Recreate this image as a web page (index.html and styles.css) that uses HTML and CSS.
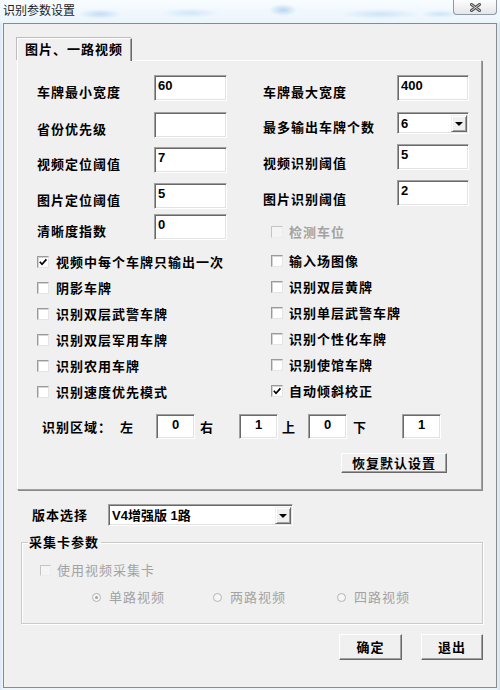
FILE: index.html
```html
<!DOCTYPE html>
<html lang="zh-CN">
<head>
<meta charset="utf-8">
<title>识别参数设置</title>
<link rel="stylesheet" href="styles.css">
</head>
<body>
<div class="window">
  <div class="titlebar">
    <span class="title">识别参数设置</span>
    <div class="close">
      <svg width="13" height="9" viewBox="0 0 13 9"><path d="M2.5 1.5L10.5 7.5M10.5 1.5L2.5 7.5" stroke="#505050" stroke-width="3" stroke-linecap="round"/><path d="M2.5 1.5L10.5 7.5M10.5 1.5L2.5 7.5" stroke="#d8d8d8" stroke-width="1" stroke-linecap="round"/></svg>
    </div>
  </div>
  <div class="client">
    <div class="tabs"><div class="tab">图片、一路视频</div></div>
    <div class="panel">
      <div class="cols">
        <div class="col col-left">
          <div class="frow"><span class="lbl">车牌最小宽度</span><span class="field">60</span></div>
          <div class="frow r2"><span class="lbl">省份优先级</span><span class="field"></span></div>
          <div class="frow r3"><span class="lbl">视频定位阈值</span><span class="field">7</span></div>
          <div class="frow r4"><span class="lbl">图片定位阈值</span><span class="field">5</span></div>
          <div class="frow r5"><span class="lbl">清晰度指数</span><span class="field">0</span></div>
          <div class="cblist">
            <div class="cbrow"><span class="cb"><svg width="10" height="10" viewBox="0 0 10 10"><path d="M1.8 4.8L4 7.2L8.4 2.4" fill="none" stroke="#000" stroke-width="1.7"/></svg></span><span class="cbtext">视频中每个车牌只输出一次</span></div>
            <div class="cbrow"><span class="cb"></span><span class="cbtext">阴影车牌</span></div>
            <div class="cbrow"><span class="cb"></span><span class="cbtext">识别双层武警车牌</span></div>
            <div class="cbrow"><span class="cb"></span><span class="cbtext">识别双层军用车牌</span></div>
            <div class="cbrow"><span class="cb"></span><span class="cbtext">识别农用车牌</span></div>
            <div class="cbrow"><span class="cb"></span><span class="cbtext">识别速度优先模式</span></div>
          </div>
        </div>
        <div class="col col-right">
          <div class="frow"><span class="lbl">车牌最大宽度</span><span class="field">400</span></div>
          <div class="frow r2 combo-row"><span class="lbl lbl-combo">最多输出车牌个数</span>
            <span class="combo combo-small"><span class="combo-text">6</span><span class="drop"><span class="tri"></span></span></span>
          </div>
          <div class="frow r3b"><span class="lbl lbl-low">视频识别阈值</span><span class="field">5</span></div>
          <div class="frow r3b"><span class="lbl lbl-low">图片识别阈值</span><span class="field">2</span></div>
          <div class="cbrow disabled first-right"><span class="cb"></span><span class="cbtext">检测车位</span></div>
          <div class="cblist right-list">
            <div class="cbrow"><span class="cb"></span><span class="cbtext">输入场图像</span></div>
            <div class="cbrow"><span class="cb"></span><span class="cbtext">识别双层黄牌</span></div>
            <div class="cbrow"><span class="cb"></span><span class="cbtext">识别单层武警车牌</span></div>
            <div class="cbrow"><span class="cb"></span><span class="cbtext">识别个性化车牌</span></div>
            <div class="cbrow"><span class="cb"></span><span class="cbtext">识别使馆车牌</span></div>
            <div class="cbrow"><span class="cb"><svg width="10" height="10" viewBox="0 0 10 10"><path d="M1.8 4.8L4 7.2L8.4 2.4" fill="none" stroke="#000" stroke-width="1.7"/></svg></span><span class="cbtext">自动倾斜校正</span></div>
          </div>
        </div>
      </div>
      <div class="region">
        <span class="rl rl-title">识别区域：</span>
        <span class="rl rl-left">左</span>
        <span class="field field-small">0</span>
        <span class="rl rl-right">右</span>
        <span class="field field-small">1</span>
        <span class="rl rl-up">上</span>
        <span class="field field-small">0</span>
        <span class="rl rl-down">下</span>
        <span class="field field-small">1</span>
      </div>
      <div class="reset-row"><button class="btn btn-reset">恢复默认设置</button></div>
    </div>
    <div class="version">
      <span class="lbl vlbl">版本选择</span>
      <span class="combo combo-wide"><span class="combo-text">V4增强版 1路</span><span class="drop"><span class="tri"></span></span></span>
    </div>
    <fieldset class="group">
      <legend class="legend">采集卡参数</legend>
      <div class="group-inner">
        <div class="gcb disabled"><span class="cb"></span><span class="gtext">使用视频采集卡</span></div>
        <div class="radios">
          <div class="radio r-one"><span class="rb"><span class="dot"></span></span><span class="gtext">单路视频</span></div>
          <div class="radio r-two"><span class="rb"></span><span class="gtext">两路视频</span></div>
          <div class="radio"><span class="rb"></span><span class="gtext">四路视频</span></div>
        </div>
      </div>
    </fieldset>
    <div class="actions">
      <button class="btn btn-ok">确定</button>
      <button class="btn btn-exit">退出</button>
    </div>
  </div>
</div>
</body>
</html>
```
FILE: styles.css
```css
* { box-sizing: border-box; }
html, body { margin: 0; padding: 0; }
body {
  width: 500px;
  height: 690px;
  overflow: hidden;
  font-family: "Noto Sans CJK SC", "Liberation Sans", sans-serif;
  font-size: 13px;
  color: #000;
  background: #eef5fb;
}
.window {
  width: 500px;
  height: 690px;
  display: flex;
  flex-direction: column;
  background: linear-gradient(90deg, #dbe9f6 0px, #eef6fc 3px, #eef6fc 496px, #cfe2f3 500px);
}
.titlebar {
  height: 23px;
  display: flex;
  justify-content: space-between;
  align-items: flex-start;
  background:
    radial-gradient(ellipse 22px 5px at 100px 14px, rgba(160,200,235,0.55), transparent),
    radial-gradient(ellipse 30px 5px at 190px 13px, rgba(170,210,240,0.45), transparent),
    radial-gradient(ellipse 14px 6px at 283px 10px, rgba(140,185,225,0.55), transparent),
    radial-gradient(ellipse 40px 5px at 380px 14px, rgba(170,210,240,0.5), transparent),
    radial-gradient(ellipse 20px 4px at 440px 14px, rgba(170,210,240,0.5), transparent),
    linear-gradient(#f8fcff, #eaf5fc);
}
.title {
  font-size: 12px;
  line-height: 14px;
  margin: 3px 0 0 3px;
  color: #1e1e1e;
}
.close {
  width: 44px;
  height: 15px;
  margin-right: 3px;
  border: 1px solid #8f98a3;
  border-top: none;
  border-radius: 0 0 4px 4px;
  background: linear-gradient(#fdfdfd, #e3e6ea);
  display: flex;
  align-items: center;
  justify-content: center;
}
.client {
  margin: 0 3px;
  height: 665px;
  background: #f0f0f0;
  border: 1px solid #8a8a8a;
}
.tabs {
  padding-left: 13px;
  margin-top: 14px;
  display: flex;
}
.tab {
  position: relative;
  z-index: 1;
  width: 115px;
  height: 23px;
  margin-bottom: -1px;
  background: #f0f0f0;
  border-top: 1px solid #fff;
  border-left: 1px solid #fff;
  border-right: 1px solid #696969;
  box-shadow: inset -1px 0 0 #a0a0a0, -1px -1px 0 #bdbdbd;
  padding-left: 7px;
  line-height: 20px;
  font-weight: 700;
  letter-spacing: 1px;
  white-space: nowrap;
}
.panel {
  margin-left: 13px;
  width: 465px;
  height: 430px;
  border: 1px solid;
  border-color: #fff #a0a0a0 #a0a0a0 #fff;
  box-shadow: 1px 1px 0 #8a8a8a;
}
.cols {
  display: flex;
  align-items: flex-start;
  gap: 36px;
  padding: 14px 0 0 19px;
}
.col { display: flex; flex-direction: column; }
.col-left { width: 190px; }
.col-right { width: 206px; }
.frow { display: flex; align-items: flex-start; height: 26px; }
.r2 { margin-top: 11px; }
.r3 { margin-top: 9px; }
.r4 { margin-top: 10px; }
.r5 { margin-top: 5px; }
.r3b { margin-top: 10px; }
.combo-row { height: 22px; }
.lbl {
  padding-top: 9px;
  line-height: 16px;
  font-weight: 700;
  letter-spacing: 1px;
  white-space: nowrap;
}
.col-left .lbl { width: 117px; }
.col-right .lbl { width: 134px; }
.lbl-combo { padding-top: 7px; }
.lbl-low { padding-top: 11px; }
.field {
  display: block;
  width: 73px;
  height: 26px;
  background: #fff;
  border: 1px solid;
  border-color: #a0a0a0 #fff #fff #a0a0a0;
  box-shadow: inset 1px 1px 0 #696969, inset -1px -1px 0 #e3e3e3;
  padding: 3px 0 0 3px;
  font-family: "Liberation Sans", Arial, sans-serif;
  font-weight: 700;
  font-size: 13px;
  line-height: 14px;
}
.col-right .field { width: 72px; }
.combo {
  display: flex;
  background: #fff;
  border: 1px solid;
  border-color: #a0a0a0 #fff #fff #a0a0a0;
  box-shadow: inset 1px 1px 0 #696969, inset -1px -1px 0 #e3e3e3;
  padding: 2px 1px 1px 2px;
}
.combo-small { width: 72px; height: 22px; }
.combo-wide { width: 185px; height: 22px; }
.combo-text {
  flex: 1;
  padding: 1px 0 0 1px;
  font-family: "Liberation Sans", "Noto Sans CJK SC", sans-serif;
  font-weight: 700;
  font-size: 13px;
  line-height: 15px;
  white-space: nowrap;
}
.drop {
  width: 16px;
  background: #f0f0f0;
  border: 1px solid;
  border-color: #f0f0f0 #696969 #696969 #f0f0f0;
  box-shadow: inset 1px 1px 0 #fff, inset -1px -1px 0 #a0a0a0;
  display: flex;
  align-items: center;
  justify-content: center;
}
.tri {
  width: 0;
  height: 0;
  border-left: 4px solid transparent;
  border-right: 4px solid transparent;
  border-top: 4px solid #000;
}
.cblist { display: flex; flex-direction: column; }
.col-left .cblist { margin-top: 9px; }
.cbrow {
  display: flex;
  align-items: center;
  gap: 7px;
  height: 26px;
}
.col-right .cbrow { padding-left: 8px; gap: 6px; }
.first-right { margin-top: 13px; }
.right-list { margin-top: 3px; }
.cb {
  width: 12px;
  height: 12px;
  flex: none;
  background: #fff;
  border: 1px solid;
  border-color: #9a9a9a #e4e4e4 #e4e4e4 #9a9a9a;
  box-shadow: inset 1px 1px 0 #d4d4d4;
  display: flex;
  align-items: center;
  justify-content: center;
}
.cbtext {
  font-weight: 700;
  letter-spacing: 1px;
  line-height: 16px;
  white-space: nowrap;
}
.disabled .cbtext { color: #a3a3a3; }
.disabled .cb { background: #f4f4f4; border-color: #c4c4c4 #ececec #ececec #c4c4c4; box-shadow: none; }
.region {
  display: flex;
  align-items: center;
  height: 25px;
  margin-top: 9px;
  padding-left: 24px;
}
.rl {
  font-weight: 700;
  letter-spacing: 1px;
  line-height: 16px;
  white-space: nowrap;
}
.rl-title { width: 78px; }
.rl-left { width: 36px; }
.rl-right { width: 39px; margin-left: 5px; }
.rl-up { width: 26px; margin-left: 4px; }
.rl-down { width: 49px; margin-left: 6px; }
.field-small {
  width: 39px;
  height: 25px;
  text-align: center;
  padding: 3px 0 0 0;
}
.reset-row {
  display: flex;
  justify-content: flex-end;
  margin-top: 14px;
  padding-right: 34px;
}
.btn {
  font-family: "Noto Sans CJK SC", sans-serif;
  font-size: 13px;
  font-weight: 700;
  letter-spacing: 1px;
  color: #000;
  background: #f0f0f0;
  border: 1px solid;
  border-color: #fff #696969 #696969 #fff;
  box-shadow: inset -1px -1px 0 #a0a0a0;
  padding: 0;
  margin: 0;
  line-height: 16px;
}
.btn-reset { width: 106px; height: 20px; }
.version {
  display: flex;
  align-items: center;
  height: 22px;
  margin-top: 14px;
  padding-left: 28px;
}
.vlbl { width: 76px; padding-top: 0; }
.group {
  margin: 8px 0 0 17px;
  width: 462px;
  height: 90px;
  padding: 0 0 0 6px;
  border: 1px solid #cacaca;
  box-shadow: inset 1px 1px 0 #fff, 1px 1px 0 #fff;
  min-width: 0;
}
.legend {
  padding: 0 2px 0 1px;
  font-weight: 700;
  letter-spacing: 1px;
  line-height: 16px;
}
.group-inner { padding-left: 12px; }
.gcb {
  display: flex;
  align-items: center;
  gap: 6px;
  height: 16px;
  margin-top: 12px;
}
.gtext {
  color: #a3a3a3;
  letter-spacing: 1px;
  line-height: 16px;
  white-space: nowrap;
}
.gcb .cb { width: 11px; height: 11px; }
.radios {
  display: flex;
  align-items: center;
  height: 16px;
  margin-top: 11px;
  padding-left: 52px;
}
.radio { display: flex; align-items: center; gap: 8px; }
.r-one { width: 121px; }
.r-two { width: 124px; }
.rb {
  width: 9px;
  height: 9px;
  border-radius: 50%;
  border: 1px solid #b4b4b4;
  background: #f6f6f6;
  display: flex;
  align-items: center;
  justify-content: center;
}
.dot { width: 3px; height: 3px; border-radius: 50%; background: #a0a0a0; }
.actions {
  display: flex;
  justify-content: flex-end;
  gap: 19px;
  margin-top: 10px;
  padding-right: 13px;
}
.btn-ok { width: 63px; height: 26px; }
.btn-exit { width: 62px; height: 26px; }
```
